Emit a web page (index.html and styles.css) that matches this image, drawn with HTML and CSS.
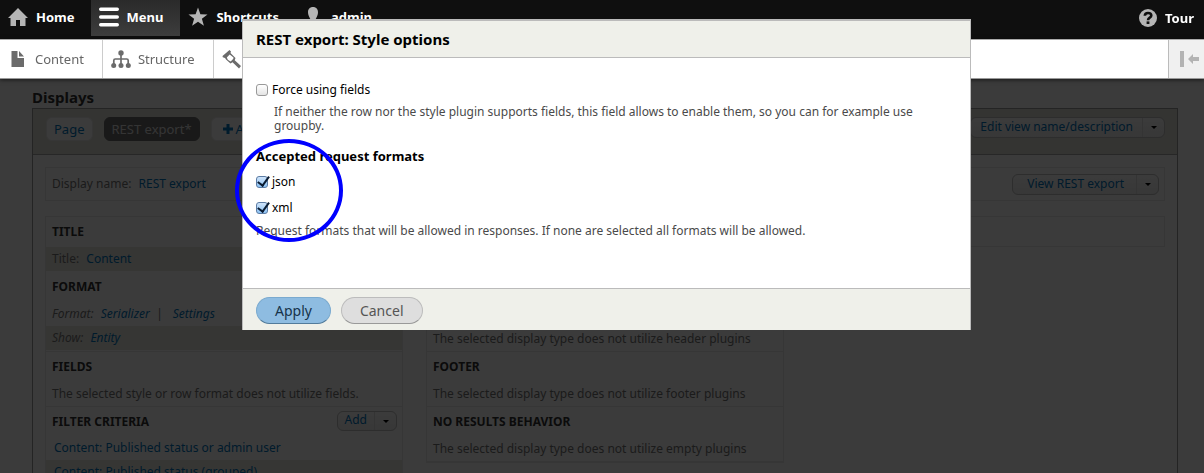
FILE: index.html
```html
<!DOCTYPE html>
<html lang="en">
<head>
<meta charset="utf-8">
<title>REST export: Style options</title>
<link rel="stylesheet" href="styles.css">
</head>
<body>
<header class="toolbar">
  <nav class="bar" aria-label="Toolbar">
    <a class="bar-item" href="#">
      <svg class="icon" width="20" height="20" viewBox="0 0 20 20"><path fill="#b5b5b5" d="M10 1 20 11h-2.500v8h-5.500v-6h-4v6h-5.500v-8H0z"/></svg>Home</a>
    <a class="bar-item bar-item-active" href="#">
      <svg class="icon" width="20" height="20" viewBox="0 0 20 20"><path stroke="#fff" stroke-width="3.400" stroke-linecap="round" d="M1.700 2.200h16.600M1.700 10h16.600M1.700 17.800h16.600"/></svg>Menu</a>
    <a class="bar-item" href="#">
      <svg class="icon" width="20" height="20" viewBox="0 0 20 20"><path fill="#b5b5b5" d="M10 .5l2.400 6.700 7.100.2-5.600 4.400 2 6.900-5.900-4-5.900 4 2-6.900L.5 7.400l7.100-.2z"/></svg>Shortcuts</a>
    <a class="bar-item" href="#">
      <svg class="icon" width="20" height="20" viewBox="0 0 20 20"><path fill="#b5b5b5" d="M10 0c3.200 0 5 2.200 5 5.200 0 2.200-1 4.500-2 6.300-.8 1-.3 2.300 1 2.800 2.500 1 4 1.500 4 4.700H2c0-3.200 1.500-3.700 4-4.700 1.300-.5 1.800-1.800 1-2.800-1-1.800-2-4.100-2-6.300C5 2.200 6.800 0 10 0z"/></svg>admin</a>
    <a class="bar-item bar-item-tour" href="#">
      <svg class="icon" width="18" height="18" viewBox="0 0 18 18"><circle cx="9" cy="9" r="9" fill="#b5b5b5"/><path fill="none" stroke="#0f0f0f" stroke-width="2.600" d="M5.800 6.800C5.900 4.900 7.200 4 9 4c2 0 3.300 1 3.300 2.600C12.300 8.800 9 8.600 9 11.200"/><path fill="#0f0f0f" d="M7.600 12.400h2.800v2.600H7.600z"/></svg>Tour</a>
  </nav>
  <nav class="tray" aria-label="Administration">
    <a class="tray-item" href="#">
      <svg class="icon" width="20" height="20" viewBox="0 0 20 20"><path fill="#6b6b6b" d="M3.500 2h6v7H16v9H3.500zM11 2l5 5.500h-5z"/></svg>Content</a>
    <a class="tray-item" href="#">
      <svg class="icon" width="20" height="20" viewBox="0 0 20 20"><g fill="#6b6b6b"><circle cx="10" cy="4" r="2.700"/><circle cx="2.700" cy="16.500" r="2.500"/><circle cx="10" cy="16.500" r="2.500"/><circle cx="17.300" cy="16.500" r="2.500"/></g><path fill="none" stroke="#6b6b6b" stroke-width="1.700" d="M10 4v12M2.800 16v-4.500q0-1.500 1.500-1.500h11.400q1.500 0 1.500 1.500V16"/></svg>Structure</a>
    <a class="tray-item" href="#">
      <svg class="icon" width="20" height="20" viewBox="0 0 20 20"><path fill="#6b6b6b" fill-rule="evenodd" d="M7.500 1 9 2.500 8.500 4l5 5-.8 2.300L19 17l-2 2.500-6.500-6.300-2 1.300L4 10.500 3 9 .8 8.200.5 7zM7.700 5.500 4.800 8.400l1 2.400 2.700 1.700 1.200-1 1.600-1.800.2-1.200z"/></svg>Appearance</a>
    <button class="tray-toggle" type="button" aria-label="Vertical orientation">
      <svg width="20" height="18" viewBox="0 0 20 18"><path fill="#b3b3b3" d="M1 1h4v16H1zM9 9l5-5v3h6v4h-6v3z"/></svg>
    </button>
  </nav>
</header>

<main class="page">
  <h1 class="page-title">Displays</h1>
  <section class="displays">
    <div class="display-tabs">
      <a class="tab" href="#">Page</a>
      <a class="tab tab-active" href="#">REST export*</a>
      <a class="tab tab-add" href="#"><svg width="10" height="10" viewBox="0 0 10 10"><path fill="#0074bd" d="M3.500 0h3v3.500H10v3H6.500V10h-3V6.500H0v-3h3.500z"/></svg>Add</a>
      <div class="dropbutton dropbutton-end">
        <a class="dropbutton-action" href="#">Edit view name/description</a>
        <button class="dropbutton-toggle" type="button" aria-label="More view actions"></button>
      </div>
    </div>
    <div class="display-body">
      <div class="display-name">
        <span>Display name: <a class="value" href="#">REST export</a></span>
        <div class="dropbutton dropbutton-end">
          <a class="dropbutton-action dropbutton-wide" href="#">View REST export</a>
          <button class="dropbutton-toggle" type="button" aria-label="More display actions"></button>
        </div>
      </div>
      <div class="columns">
        <div class="column">
          <section class="bucket"><h2>Title</h2>
            <p class="setting striped">Title: <a class="value" href="#">Content</a></p></section>
          <section class="bucket"><h2>Format</h2>
            <p class="setting"><em>Format: <a class="value" href="#">Serializer</a> <span class="pipe">|</span> <a class="value" href="#">Settings</a></em></p>
            <p class="setting striped"><em>Show: <a class="value" href="#">Entity</a></em></p></section>
          <section class="bucket bucket-ruled"><h2>Fields</h2>
            <p class="setting">The selected style or row format does not utilize fields.</p></section>
          <section class="bucket bucket-ruled">
            <div class="bucket-head"><h2>Filter criteria</h2>
              <div class="dropbutton dropbutton-small">
                <a class="dropbutton-action" href="#">Add</a>
                <button class="dropbutton-toggle" type="button" aria-label="More filter actions"></button>
              </div></div>
            <p class="setting"><a class="filter" href="#">Content: Published status or admin user</a></p>
            <p class="setting striped"><a class="filter" href="#">Content: Published status (grouped)</a></p></section>
        </div>
        <div class="column column-second">
          <section class="bucket bucket-ruled"><h2>Header</h2>
            <p class="setting">The selected display type does not utilize header plugins</p></section>
          <section class="bucket bucket-ruled"><h2>Footer</h2>
            <p class="setting">The selected display type does not utilize footer plugins</p></section>
          <section class="bucket bucket-ruled"><h2>No results behavior</h2>
            <p class="setting">The selected display type does not utilize empty plugins</p></section>
          <section class="bucket bucket-ruled"></section>
        </div>
        <div class="column column-advanced"></div>
      </div>
    </div>
  </section>
</main>

<div class="overlay"></div>

<form class="dialog" role="dialog" aria-labelledby="dialog-title">
  <h2 class="dialog-title" id="dialog-title">REST export: Style options</h2>
  <div class="dialog-content">
    <div class="check-row">
      <input class="check" type="checkbox" id="force-fields">
      <label for="force-fields">Force using fields</label>
    </div>
    <p class="description description-indent">If neither the row nor the style plugin supports fields, this field allows to enable them, so you can for example use groupby.</p>
    <fieldset class="formats">
      <legend>Accepted request formats</legend>
      <div class="check-row">
        <input class="check" type="checkbox" id="format-json" checked>
        <label for="format-json">json</label>
      </div>
      <div class="check-row">
        <input class="check" type="checkbox" id="format-xml" checked>
        <label for="format-xml">xml</label>
      </div>
    </fieldset>
    <p class="description">Request formats that will be allowed in responses. If none are selected all formats will be allowed.</p>
  </div>
  <div class="dialog-buttons">
    <button class="button button-primary" type="button">Apply</button>
    <button class="button" type="button">Cancel</button>
  </div>
  <span class="highlight"></span>
</form>
</body>
</html>
```
FILE: styles.css
```css
* { box-sizing: border-box; }
html, body { height: 100%; }
body {
  margin: 0;
  overflow: hidden;
  background: #fff;
  color: #777;
  font: 12px/16px "Noto Sans", "Open Sans", sans-serif;
}
h1, h2, p { margin: 0; }
a { color: #0074bd; text-decoration: none; }
button, input { font: inherit; }

/* Toolbar */
.toolbar { position: relative; z-index: 2; }
.bar {
  display: flex;
  height: 39px;
  background: #0f0f0f;
}
.bar-item {
  display: flex;
  align-items: center;
  gap: 8px;
  height: 36px;
  padding: 0 16px 3px 8px;
  color: #fff;
  font-size: 13px;
  font-weight: 700;
}
.bar-item-active { padding-right: 17px; background: linear-gradient(#2a2a2a, #3d3d3d); }
.bar-item-tour { margin-left: auto; padding: 0 10px 0 8px; }
.icon { flex: none; }
.tray {
  display: flex;
  height: 40px;
  background: #fff;
  border-top: 1px solid #aaa;
  border-bottom: 1px solid #999;
  box-shadow: 0 1px 4px rgba(0, 0, 0, .6);
}
.tray-item {
  display: flex;
  align-items: center;
  gap: 7px;
  padding: 0 18px 0 8px;
  border-right: 1px solid #ccc;
  color: #666;
  font-size: 13px;
}
.tray-toggle {
  display: flex;
  align-items: center;
  margin-left: auto;
  width: 36px;
  padding: 0 0 0 10px;
  border: 0;
  border-left: 1px solid #bbb;
  background: #f0f0f0;
}

/* Views editing page, under the overlay */
.page { height: calc(100% - 79px); overflow: hidden; padding: 9px 26px 0 32px; }
.page-title { color: #333; font-size: 15px; line-height: 18px; padding-bottom: 2px; }
.displays { border: 1px solid #9c9c9c; }
.display-tabs {
  display: flex;
  align-items: flex-start;
  gap: 11px;
  height: 46px;
  padding: 8px 12px 0 13px;
  background: #e1e0d8;
  border-bottom: 1px solid #aaa;
}
.tab {
  display: flex;
  align-items: center;
  gap: 3px;
  height: 24px;
  padding: 0 7px;
  border: 1px solid #e8e8e8;
  border-radius: 6px;
  background: #fff;
  font-size: 13px;
}
.tab-active { background: #6b6b6b; border-color: #6b6b6b; color: #e2e2e2; }
.tab-add { padding-left: 11px; }
.dropbutton {
  display: flex;
  height: 21px;
  border: 1px solid #c0c0c0;
  border-radius: 6px;
  background: linear-gradient(#fff, #eee);
}
.dropbutton-end { margin-left: auto; }
.dropbutton-action { padding: 1px 9px; }
.dropbutton-wide { padding: 1px 12px 1px 14px; }
.dropbutton-toggle {
  display: flex;
  align-items: center;
  justify-content: center;
  width: 22px;
  padding: 0;
  border: 0;
  border-left: 1px solid #e0e0e0;
  background: none;
}
.dropbutton-toggle::before {
  content: "";
  border: 3px solid transparent;
  border-top: 3px solid #000;
  border-bottom: 0;
}
.dropbutton-small { height: 20px; }
.dropbutton-small .dropbutton-action { padding: 0 7px; }
.display-body { padding: 12px; }
.display-name {
  display: flex;
  align-items: center;
  height: 34px;
  margin-bottom: 15px;
  padding: 0 5px 0 6px;
  border: 1px solid #e9e9e9;
}
.value { margin-left: 4px; }
.columns {
  display: grid;
  grid-template-columns: 358px 358px 1fr;
  gap: 23px;
  align-items: start;
}
.column { border: 1px solid #e9e9e9; }
.column-second { padding-top: 79px; }
.column-advanced { height: 31px; }
.bucket { padding-bottom: 1px; }
.bucket-ruled { border-top: 1px solid #e9e9e9; padding-bottom: 0; }
.bucket h2 {
  padding: 5px 6px 0;
  color: #333;
  font-size: 12px;
  line-height: 20px;
  height: 30px;
  text-transform: uppercase;
}
.bucket-head { display: flex; justify-content: space-between; padding: 4px 5px 0 0; }
.bucket-head h2 { padding-top: 1px; height: 25px; }
.setting { padding: 4px 6px; }
.striped { background: #e8e8e0; }
.pipe { margin: 0 3px; }
.filter { margin-left: 2px; }

.overlay {
  position: fixed;
  inset: 0;
  z-index: 1;
  background: rgba(0, 0, 0, .77);
}

/* Dialog */
.dialog {
  position: absolute;
  z-index: 3;
  top: 19px;
  left: 50%;
  width: 729px;
  margin-left: -360px;
  background: #fff;
  border: 1px solid #bbb;
  border-width: 2px 1px 0;
  color: #000;
}
.dialog-title {
  height: 37px;
  padding: 0 13px;
  background: #eff0ea;
  border-bottom: 1px solid #bbb;
  font-size: 15px;
  line-height: 36px;
}
.dialog-content { padding: 23px 13px 50px; }
.check-row { display: flex; align-items: center; gap: 4px; height: 18px; }
.check {
  appearance: none;
  flex: none;
  position: relative;
  width: 12px;
  height: 12px;
  margin: 0;
  border: 1px solid #999;
  border-radius: 3px;
  background: linear-gradient(#fff, #e4e4e4);
}
.check:checked { border-color: #5c7ca5; background: linear-gradient(#cfe4fa, #8dc3f5); }
.check:checked::after {
  content: "";
  position: absolute;
  left: 3px;
  top: -3px;
  width: 5px;
  height: 10px;
  border: solid #0a1c33;
  border-width: 0 2px 2px 0;
  transform: rotate(36deg);
}
.description { color: #4a4a4a; line-height: 14px; }
.description-indent { padding: 6px 0 0 18px; }
.formats { margin: 0; padding: 0 0 7px; border: 0; }
.formats legend { padding: 15px 0 9px; font-size: 13px; font-weight: 700; }
.formats .check-row + .check-row { margin-top: 8px; }
.dialog-buttons {
  display: flex;
  gap: 10px;
  padding: 8px 13px 6px;
  background: #eff0ea;
  border-top: 1px solid #bbb;
}
.button {
  height: 27px;
  padding: 0 18px;
  border: 1px solid #bcbcbc;
  border-bottom-color: #999;
  border-radius: 14px;
  background: #dedede;
  color: #555;
  font-size: 14px;
  line-height: 24px;
}
.button-primary { background: #8ebce1; border-color: #7aaacf; border-bottom-color: #527b9b; color: #16324a; }
.highlight {
  position: absolute;
  left: -8px;
  top: 118px;
  width: 108px;
  height: 103px;
  border: 4px solid #00f;
  border-radius: 50%;
  pointer-events: none;
}
```
